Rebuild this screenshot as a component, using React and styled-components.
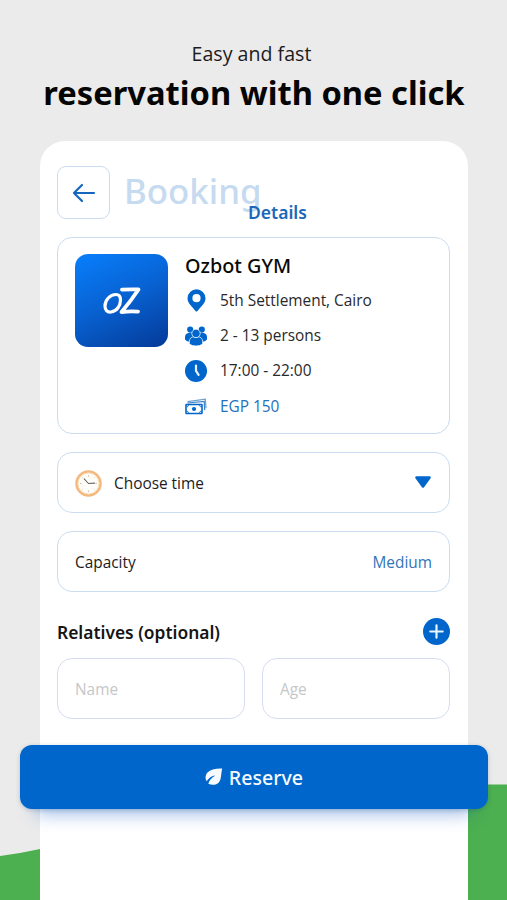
import React from "react";
import styled, { createGlobalStyle } from "styled-components";

const blue = "#0066cc";
const line = "#cbdcf0";
const bodyFont = '"Open Sans", "Noto Sans", sans-serif';

const GlobalStyle = createGlobalStyle`
  *, *::before, *::after { box-sizing: border-box; }
  body { margin: 0; background: #ebebeb; font-family: "Noto Sans", "Open Sans", sans-serif; color: #1c1c1e; }
  button, input { font: inherit; }
  svg { display: block; flex: none; }
`;

const Page = styled.main`
  position: relative;
  height: 900px;
  overflow: hidden;
  display: flex;
  flex-direction: column;
  background: #ebebeb;
`;

const Hills = styled.svg`
  position: absolute;
  inset: 0;
`;

const Intro = styled.header`
  height: 141px;
  padding-top: 40px;
  flex: none;
  text-align: center;
`;

const Tagline = styled.p`
  margin: 0 4px 0 0;
  font-family: ${bodyFont};
  font-size: 19.6px;
  line-height: 28px;
`;

const Headline = styled.h1`
  margin: 2px 0 0 1px;
  font-size: 32.7px;
  line-height: 46px;
  font-weight: 700;
  color: #050505;
  white-space: nowrap;
`;

const Phone = styled.section`
  position: relative;
  flex: 1;
  width: 428px;
  margin-left: 40px;
  padding: 25px 18px 0 17px;
  border-radius: 25px 25px 0 0;
  background: #fff;
`;

const TitleBar = styled.div`
  display: flex;
  height: 71px;
  gap: 14px;
`;

const BackButton = styled.button`
  display: grid;
  place-items: center;
  width: 53px;
  height: 53px;
  padding: 0;
  border: 1.5px solid ${line};
  border-radius: 9px;
  background: #fff;
`;

const Title = styled.h2`
  position: relative;
  margin: 0;
  font-size: 34.8px;
  line-height: 50px;
  font-weight: 500;
  color: #c6daf0;
`;

const Subtitle = styled.span`
  position: absolute;
  left: 124px;
  top: 34px;
  font-size: 17.5px;
  line-height: 24px;
  font-weight: 600;
  color: #1b68bb;
`;

const Box = styled.div`
  border: 1.5px solid ${line};
  border-radius: 15px;
  background: #fff;
`;

const VenueCard = styled(Box)`
  display: flex;
  gap: 17px;
  height: 197px;
  padding: 16px 16px 16px 17px;
`;

const Logo = styled.div`
  display: grid;
  place-items: center;
  width: 93px;
  height: 93px;
  border-radius: 13px;
  background: linear-gradient(155deg, #087cf8 5%, #0862d2 48%, #043a98 100%);
`;

const VenueInfo = styled.div`
  display: flex;
  flex-direction: column;
`;

const VenueName = styled.h3`
  margin: -2px 0 3px;
  font-size: 19.8px;
  line-height: 28px;
  font-weight: 550;
  color: #0a0a0a;
`;

const Fact = styled.div`
  display: grid;
  grid-template-columns: 22px auto;
  align-items: center;
  gap: 13px;
  flex: none;
  height: 35.2px;
  font-family: ${bodyFont};
  font-size: 15.4px;
  white-space: nowrap;
  color: ${({ $accent }) => ($accent ? "#2471bd" : "#29292b")};

  svg { justify-self: center; }
`;

const Row = styled(Box)`
  display: flex;
  align-items: center;
  justify-content: space-between;
  height: 61px;
  margin-top: 18px;
  padding: 1px 17px 0;
  font-family: ${bodyFont};
  font-size: 15.4px;
`;

const RowLabel = styled.span`
  display: flex;
  align-items: center;
  gap: 12px;
`;

const RowValue = styled.span`
  color: #3474b9;
`;

const SectionHead = styled.div`
  display: flex;
  align-items: center;
  justify-content: space-between;
  height: 27px;
  margin-top: 26px;
`;

const SectionTitle = styled.h4`
  margin: 0;
  font-size: 17.4px;
  line-height: 24px;
  font-weight: 600;
  color: #151515;
`;

const AddButton = styled.button`
  display: grid;
  place-items: center;
  width: 27px;
  height: 27px;
  padding: 0;
  border: 0;
  border-radius: 50%;
  background: ${blue};
`;

const Fields = styled.div`
  display: grid;
  grid-template-columns: 1fr 1fr;
  gap: 17px;
  margin-top: 13px;
`;

const Field = styled.input`
  width: 100%;
  height: 61px;
  padding: 2px 17px 0;
  border: 1.5px solid #d6dcf1;
  border-radius: 15px;
  background: #fff;
  font-family: ${bodyFont};
  font-size: 15.4px;

  &::placeholder { color: #c6c7c9; opacity: 1; }
`;

const ReserveButton = styled.button`
  position: relative;
  display: flex;
  align-items: center;
  justify-content: center;
  gap: 6px;
  width: 468px;
  height: 64px;
  margin: 26px 0 0 -37px;
  padding: 0;
  border: 0;
  border-radius: 12px;
  background: ${blue};
  color: #f5faff;
  font-size: 19.6px;
  font-weight: 550;
  box-shadow: 0 1px 4px rgba(0, 50, 110, 0.22), 0 20px 18px -16px rgba(0, 80, 190, 0.42);
`;

function BackArrow() {
  return (
    <svg width="24" height="20" viewBox="0 0 24 20" fill="none" stroke="#1766bd" strokeWidth="2.200" strokeLinecap="round" strokeLinejoin="round">
      <path d="M22 10H2M10 2L2 10l8 8" />
    </svg>
  );
}

function OzMark() {
  return (
    <svg width="38" height="30" viewBox="0 0 38 30" fill="none" stroke="#fff" strokeLinecap="round" strokeLinejoin="round">
      <path d="M13 8.500C7 8.500 2 14 2 20c0 4 2 6.500 6 6 6-.8 9.500-6.500 9.500-12 0-3.500-1.500-5.500-4.500-5.500Z" strokeWidth="3.200" />
      <path d="M19 3.700c5.500-.3 11-.3 16.500-.2C30.500 11 25 18.500 18.500 26c5.500-.7 11.500-.9 16.500-.4" strokeWidth="3.800" />
    </svg>
  );
}

function PinIcon() {
  return (
    <svg width="19" height="23" viewBox="0 0 19 23">
      <path fill={blue} fillRule="evenodd" d="M9.500.3A9 9 0 0 0 .500 9.300c0 5.100 4.500 8.200 8.100 12.800q.9 1 1.800 0c3.600-4.600 8.100-7.700 8.100-12.800a9 9 0 0 0-9-9Zm0 4.800a4.100 4.100 0 1 1 0 8.200 4.100 4.100 0 0 1 0-8.200Z" />
    </svg>
  );
}

function PeopleIcon() {
  return (
    <svg width="22" height="20" viewBox="0 0 22 20" fill={blue}>
      <circle cx="5.200" cy="3.600" r="3.100" />
      <circle cx="16.800" cy="3.600" r="3.100" />
      <path d="M0 13.500V11c0-2.600 2-4 4-4h4v7.500l-3 1.300Q1.800 15.800 0 13.500ZM22 13.500V11c0-2.600-2-4-4-4h-4v7.500l3 1.300q3.200 0 5-2.300Z" />
      <g stroke="#fff" strokeWidth=".7">
        <path d="M4.300 18v-2c0-3.500 2.200-5.200 4.300-5.200q2.400 1.600 4.800 0c2.100 0 4.300 1.700 4.300 5.200v2q-2.700 2-6.700 2t-6.700-2Z" />
        <circle cx="11" cy="7.400" r="4.200" />
      </g>
    </svg>
  );
}

function ClockIcon() {
  return (
    <svg width="22" height="22" viewBox="0 0 22 22">
      <circle cx="11" cy="11" r="11" fill={blue} />
      <path d="M11 5.500v5.300l2.600 4" fill="none" stroke="#e4f2ff" strokeWidth="2.200" strokeLinecap="round" strokeLinejoin="round" />
    </svg>
  );
}

function CashIcon() {
  return (
    <svg width="22" height="17" viewBox="0 0 22 17" fill="none" stroke={blue}>
      <path d="M2.500 3.700 20.300 1.200l.7 9" stroke="#6c9fce" strokeWidth="1.200" />
      <path d="m2.500 5 16.700-1.500.5 8.800" stroke="#3c83c8" strokeWidth="1.200" />
      <rect x="1" y="6.500" width="16" height="9" rx=".4" strokeWidth="1.600" />
      <circle cx="9" cy="11" r="2.100" fill={blue} stroke="none" />
      <path d="M1.500 9q2 0 2-2M1.500 13q2 0 2 2M16.500 9q-2 0-2-2M16.500 13q-2 0-2 2" strokeWidth=".8" />
    </svg>
  );
}

function WallClock() {
  return (
    <svg width="27" height="27" viewBox="0 0 27 27" fill="none">
      <circle cx="13.500" cy="13.500" r="12" fill="#fffdf8" stroke="#f2b880" strokeWidth="2.500" />
      <circle cx="13.500" cy="13.500" r="10.500" stroke="#fbdcad" strokeWidth="1" />
      <path d="M13.500 5v1.600M13.500 20.400V22M5 13.500h1.600M20.400 13.500H22M7.500 7.500l.6.6M19.500 7.500l-.6.6M7.500 19.500l.6-.6M19.500 19.500l-.6-.6" stroke="#c9bfb3" strokeWidth="1" />
      <path d="m9.200 8.800 4.300 4.700 6-.4" stroke="#65696b" strokeWidth="1.100" strokeLinecap="round" strokeLinejoin="round" />
    </svg>
  );
}

function CaretDown() {
  return (
    <svg width="18" height="14" viewBox="0 0 18 14">
      <path d="M2.500 1.500h13L9 10.500Z" fill={blue} stroke={blue} strokeWidth="2.600" strokeLinejoin="round" />
    </svg>
  );
}

function PlusIcon() {
  return (
    <svg width="15" height="15" viewBox="0 0 15 15" stroke="#e9f5ff" strokeWidth="2.200" strokeLinecap="round">
      <path d="M7.500 1.300v12.400M1.300 7.500h12.400" />
    </svg>
  );
}

function LeafIcon() {
  return (
    <svg width="18" height="18" viewBox="0 0 18 18">
      <path fill="#f7fbff" d="M17.200.5C10.500.3 5.500 1.300 2.500 4.500 0 7.300.2 11 1.700 13.300L3 11.500C4.500 9.700 6.500 8.300 9.300 7.500c.4-.1.6.3.3.6C6.500 10 4.500 12.500 3.300 15.700c3.500 1.800 8 1.500 10.500-1.200C16.500 11.500 15.900 6 17.200.5Z" />
    </svg>
  );
}

const facts = [
  { Icon: PinIcon, text: "5th Settlement, Cairo" },
  { Icon: PeopleIcon, text: "2 - 13 persons" },
  { Icon: ClockIcon, text: "17:00 - 22:00" },
  { Icon: CashIcon, text: "EGP 150", accent: true },
];

export default function App() {
  return (
    <>
      <GlobalStyle />
      <Page>
        <Hills width="507" height="900" viewBox="0 0 507 900" aria-hidden="true">
          <path d="M0 856Q20 853.500 40 849V900H0ZM468 784.500H507V900H468Z" fill="#4caf50" />
        </Hills>
        <Intro>
          <Tagline>Easy and fast</Tagline>
          <Headline>reservation with one click</Headline>
        </Intro>
        <Phone>
          <TitleBar>
            <BackButton aria-label="Back"><BackArrow /></BackButton>
            <Title>Booking<Subtitle>Details</Subtitle></Title>
          </TitleBar>
          <VenueCard>
            <Logo><OzMark /></Logo>
            <VenueInfo>
              <VenueName>Ozbot GYM</VenueName>
              {facts.map(({ Icon, text, accent }) => (
                <Fact key={text} $accent={accent}><Icon />{text}</Fact>
              ))}
            </VenueInfo>
          </VenueCard>
          <Row>
            <RowLabel><WallClock />Choose time</RowLabel>
            <CaretDown />
          </Row>
          <Row>
            <RowLabel>Capacity</RowLabel>
            <RowValue>Medium</RowValue>
          </Row>
          <SectionHead>
            <SectionTitle>Relatives (optional)</SectionTitle>
            <AddButton aria-label="Add relative"><PlusIcon /></AddButton>
          </SectionHead>
          <Fields>
            <Field placeholder="Name" />
            <Field placeholder="Age" />
          </Fields>
          <ReserveButton><LeafIcon />Reserve</ReserveButton>
        </Phone>
      </Page>
    </>
  );
}
